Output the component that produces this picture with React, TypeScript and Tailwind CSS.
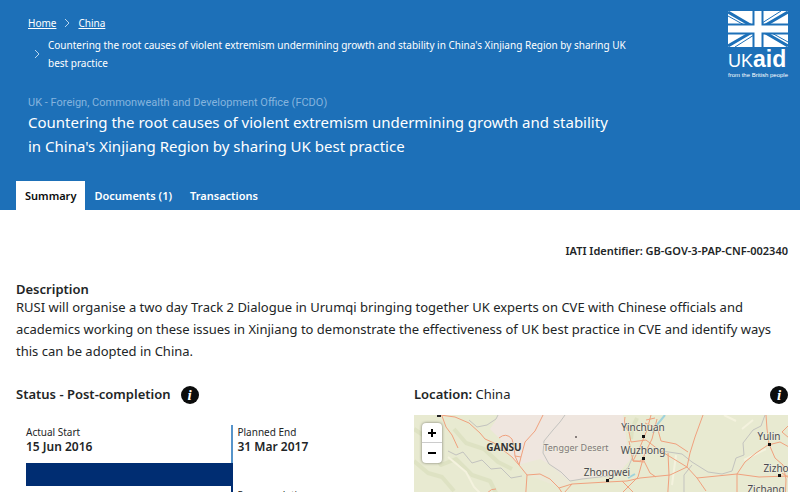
const tabs = [
  { name: "Summary", href: "#summary", active: true },
  { name: "Documents (1)", href: "#documents", active: false },
  { name: "Transactions", href: "#transactions", active: false },
];

const roads = [
  "M26 0 L41 2 L55 8 L66 18 L71 24 L80 28 L98 42 L105 50 L113 60 L111 90",
  "M28 1 L32 12 L38 20 L44 33",
  "M129 0 L121 16 L111 27 L107 42 L105 50",
  "M85 23 Q92 17 98 24 L100 32 L101 41 L105 50",
  "M101 41 L107 42",
  "M113 60 L126 59 L136 64 L145 73 L158 69 L193 67 L213 66 L226 63 L256 60 L273 52",
  "M145 73 L152 84 M158 69 L150 78",
  "M69 90 Q72 73 82 74",
  "M237 0 L233 15 L226 32 L219 46 L226 46 L229 44 L224 62 L208 78",
  "M243 4 L238 24 L231 38 L229 44 L236 58 L242 62",
  "M211 2 Q209 10 215 17 L217 27 L232 25 L245 35 L273 52 L283 63 L292 76",
  "M215 26 L219 46 L230 47",
  "M232 5 L241 3 M231 8 L240 12",
  "M244 15 L247 26 L262 29 L274 37",
  "M254 38 L255 60 L253 90",
  "M289 0 L281 22 L276 38 L273 52",
  "M283 63 L323 59 L345 62 L375 61",
  "M323 90 L323 59 L331 47 L342 38 L354 30 L366 27 L375 32",
  "M352 0 L353 14 L355 29 L361 43 L369 50 L372 64 L371 90",
  "M375 10 L368 17 L375 23",
  "M208 66 L220 78 M368 58 L375 63",
];

const borders = [
  "M151 0 L146 7 L139 15 L130 26 L129 38 L135 49 L147 57 L156 66 L168 64 L203 60 L214 53 L222 34",
  "M55 5 L63 12 L73 10 L82 4 L84 0",
  "M34 36 L42 40 L49 37 L58 48 L68 45 L77 54 L87 53 L97 63 L108 61",
  "M248 36 L268 39 L278 47 L294 57 L308 59 L318 56 L322 43 L330 40 L329 28 L339 15 L347 11 L351 0",
  "M278 50 L270 60 L270 90",
];

const places = [
  { name: "Yinchuan", x: 229, y: 16, dotX: 229, dotY: 21 },
  { name: "Wuzhong", x: 229, y: 39, dotX: 229, dotY: 43 },
  { name: "Zhongwei", x: 193, y: 61, dotX: 193, dotY: 65 },
  { name: "Yulin", x: 355, y: 25, dotX: 355, dotY: 29 },
  { name: "Zizho", x: 362, y: 57, dotX: 365, dotY: 60 },
  { name: "Zichang", x: 352, y: 78, dotX: 352, dotY: 86 },
];

function Chevron() {
  return (
    <svg width="6" height="10" viewBox="0 0 6 10" fill="none" className="shrink-0" aria-hidden="true">
      <path d="M1 1l4 4-4 4" stroke="#b9d6ee" strokeWidth="1" />
    </svg>
  );
}

function Logo() {
  return (
    <a href="#home" aria-label="UK aid from the British people" className="block w-[60px] shrink-0 font-['Liberation_Sans',sans-serif] text-white">
      <svg width="60" height="36" viewBox="0 0 60 36" className="block" aria-hidden="true">
        <rect width="60" height="36" fill="#fff" />
        <g stroke="#1d70b8" fill="none">
          <path d="M0 1L24 15M60 35L36 21" strokeWidth="3" />
          <path d="M60 1L36 15M0 35L24 21" strokeWidth="3" />
          <path d="M0 5L18 15M60 31L42 21M53 0L34 12M7 36L26 24" strokeWidth="1" />
          <path d="M30 0V36M0 18H60" strokeWidth="11" />
          <path d="M30 0V36M0 18H60" stroke="#fff" strokeWidth="7" />
        </g>
      </svg>
      <span className="mt-[2px] flex items-baseline leading-[20px]">
        <span className="text-[18px]">UK</span>
        <span className="text-[23px] font-bold">aid</span>
      </span>
      <span className="block text-[6px] leading-[8px] whitespace-nowrap">from the British people</span>
    </a>
  );
}

function InfoButton({ label }: { label: string }) {
  return (
    <button
      type="button"
      aria-label={label}
      className="flex h-[18px] w-[18px] shrink-0 items-center justify-center rounded-full bg-[#0b0c0c] font-['Liberation_Serif',serif] text-[15px] leading-none font-bold text-white italic"
    >
      i
    </button>
  );
}

function LocationMap() {
  return (
    <div className="relative mt-[10px] h-60 overflow-hidden bg-[#e8ead1]">
      <svg className="block h-full w-full" aria-label="Map of China" role="img">
        <path d="M84 0 L82 5 L76 14 L86 24 L98 42 L113 60 L156 66 L203 60 L216 45 L213 28 L209 0 Z" fill="#efe6df" />
        <path d="M104 50 L113 60 L145 72 L158 68 L135 49 L126 44 Z" fill="#ebe9d6" />
        <g fill="none" stroke="#d5dcb6" strokeWidth="4" strokeLinejoin="round" opacity="0.5">
          <path d="M0 14 L12 22 L27 50 L42 44 L58 60 L76 66 L88 90" />
          <path d="M40 14 L52 28 L70 34 L84 47 L98 54" />
          <path d="M0 46 L14 58 L28 62 L40 76" />
          <path d="M223 3 L218 14 L217 24" />
        </g>
        <g fill="none" stroke="#f4f2de" strokeWidth="2">
          <path d="M34 42 L52 57 L60 72 L72 84" />
          <path d="M310 0 L322 6 M328 14 L339 5 M262 40 L258 70 M330 45 L352 34" />
        </g>
        <g fill="none" stroke="#c3c3bf" strokeWidth="1" strokeLinejoin="round">
          {borders.map((d) => (
            <path key={d} d={d} />
          ))}
        </g>
        <path d="M251 0 L242 11 L239 18 M214 63 L221 59" fill="none" stroke="#9fd3dc" strokeWidth="2" />
        <g fill="none" stroke="#f0a17e" strokeWidth="1" strokeLinejoin="round">
          {roads.map((d) => (
            <path key={d} d={d} />
          ))}
        </g>
        <rect x="23" y="0" width="4" height="2" fill="#222" />
        <g className="text-[10px]" textAnchor="middle" fill="#4a4a4f" stroke="#f0efdf" strokeWidth="1" paintOrder="stroke">
          {places.map((place) => (
            <g key={place.name}>
              <text x={place.x} y={place.y}>
                {place.name}
              </text>
              <rect x={place.dotX - 1} y={place.dotY - 1} width="3" height="3" fill="#111" stroke="none" />
            </g>
          ))}
          <text x="162" y="36" fill="#81777a" className="text-[9px]">
            Tengger Desert
          </text>
          <circle cx="162" cy="22" r="1" fill="#665c5c" stroke="none" />
          <text x="90" y="36" fill="#333" className="text-[10px] font-bold">
            GANSU
          </text>
        </g>
      </svg>
      <div className="absolute top-2 left-2 flex w-5 flex-col divide-y divide-[#ccc] rounded-sm bg-white text-black shadow-[0_0_3px_rgba(0,0,0,0.5)]">
        <button type="button" aria-label="Zoom in" className="flex h-5 items-center justify-center">
          <svg width="8" height="8" viewBox="0 0 8 8" aria-hidden="true">
            <path d="M4 0v8M0 4h8" stroke="currentColor" strokeWidth="2" />
          </svg>
        </button>
        <button type="button" aria-label="Zoom out" className="flex h-5 items-center justify-center">
          <svg width="8" height="8" viewBox="0 0 8 8" aria-hidden="true">
            <path d="M0 4h8" stroke="currentColor" strokeWidth="2" />
          </svg>
        </button>
      </div>
    </div>
  );
}

function Timeline() {
  return (
    <div className="mt-5 ml-[10px] text-[10px] leading-[14px]">
      <div className="flex">
        <div className="w-[57%] border-r-2 border-[#5694ca] pb-2">
          <p>Actual Start</p>
          <p className="text-[12px] leading-4 font-semibold">15 Jun 2016</p>
        </div>
        <div className="pl-1">
          <p>Planned End</p>
          <p className="text-[12px] leading-4 font-semibold">31 Mar 2017</p>
        </div>
      </div>
      <div className="h-[23px] w-[57%] bg-[#002d72]" />
      <div className="flex">
        <div className="h-10 w-[57%] border-r-2 border-[#002d72]" />
        <p className="pt-[2px] pl-1">Pre-completion</p>
      </div>
    </div>
  );
}

export default function App() {
  return (
    <div className="min-h-screen bg-white font-['Noto_Sans',sans-serif] text-[#222526]">
      <header className="bg-[#1d70b8] text-white">
        <div className="flex items-start pr-3 pl-7">
          <div className="flex-1 pt-[14px] pr-16">
            <nav aria-label="Breadcrumb" className="mr-5 text-[10px] leading-[18px]">
              <div className="flex items-center gap-2">
                <a href="#home" className="underline">Home</a>
                <Chevron />
                <a href="#china" className="underline">China</a>
              </div>
              <div className="mt-1 flex items-center gap-2 pl-[6px]">
                <Chevron />
                <span>
                  Countering the root causes of violent extremism undermining growth and stability in China's Xinjiang
                  Region by sharing UK best practice
                </span>
              </div>
            </nav>
            <p className="mt-6 font-[Roboto,sans-serif] text-[11px] leading-[14px] text-[#85b4de]">
              UK - Foreign, Commonwealth and Development Office (FCDO)
            </p>
            <h1 className="mr-10 text-[15px] leading-6">
              Countering the root causes of violent extremism undermining growth and stability in China's Xinjiang
              Region by sharing UK best practice
            </h1>
          </div>
          <div className="pt-[11px]">
            <Logo />
          </div>
        </div>

        <nav aria-label="Project" className="mt-[23px] flex px-4 text-[11px] leading-[29px] font-semibold">
          {tabs.map((tab) => (
            <a
              key={tab.name}
              href={tab.href}
              className={tab.active ? "bg-white px-[9px] text-[#0b0c0c]" : "px-[9px] text-white"}
            >
              {tab.name}
            </a>
          ))}
        </nav>
      </header>

      <main className="pt-[33px] pr-3 pl-4">
        <p className="text-right text-[11px] leading-4 font-semibold">IATI Identifier: GB-GOV-3-PAP-CNF-002340</p>

        <section className="mt-[23px] text-[13px]">
          <h2 className="leading-[14px] font-semibold">Description</h2>
          <p className="leading-[22px]">
            RUSI will organise a two day Track 2 Dialogue in Urumqi bringing together UK experts on CVE with Chinese
            officials and academics working on these issues in Xinjiang to demonstrate the effectiveness of UK best
            practice in CVE and identify ways this can be adopted in China.
          </p>
        </section>

        <div className="mt-[23px] grid grid-cols-2 gap-6">
          <section>
            <div className="flex h-5 items-center gap-[10px]">
              <h2 className="text-[13px] font-semibold">Status - Post-completion</h2>
              <InfoButton label="About the status" />
            </div>
            <Timeline />
          </section>
          <section>
            <div className="flex h-5 items-center justify-between">
              <h2 className="text-[13px] font-semibold">
                Location: <span className="font-normal">China</span>
              </h2>
              <InfoButton label="About the location" />
            </div>
            <LocationMap />
          </section>
        </div>
      </main>
    </div>
  );
}
